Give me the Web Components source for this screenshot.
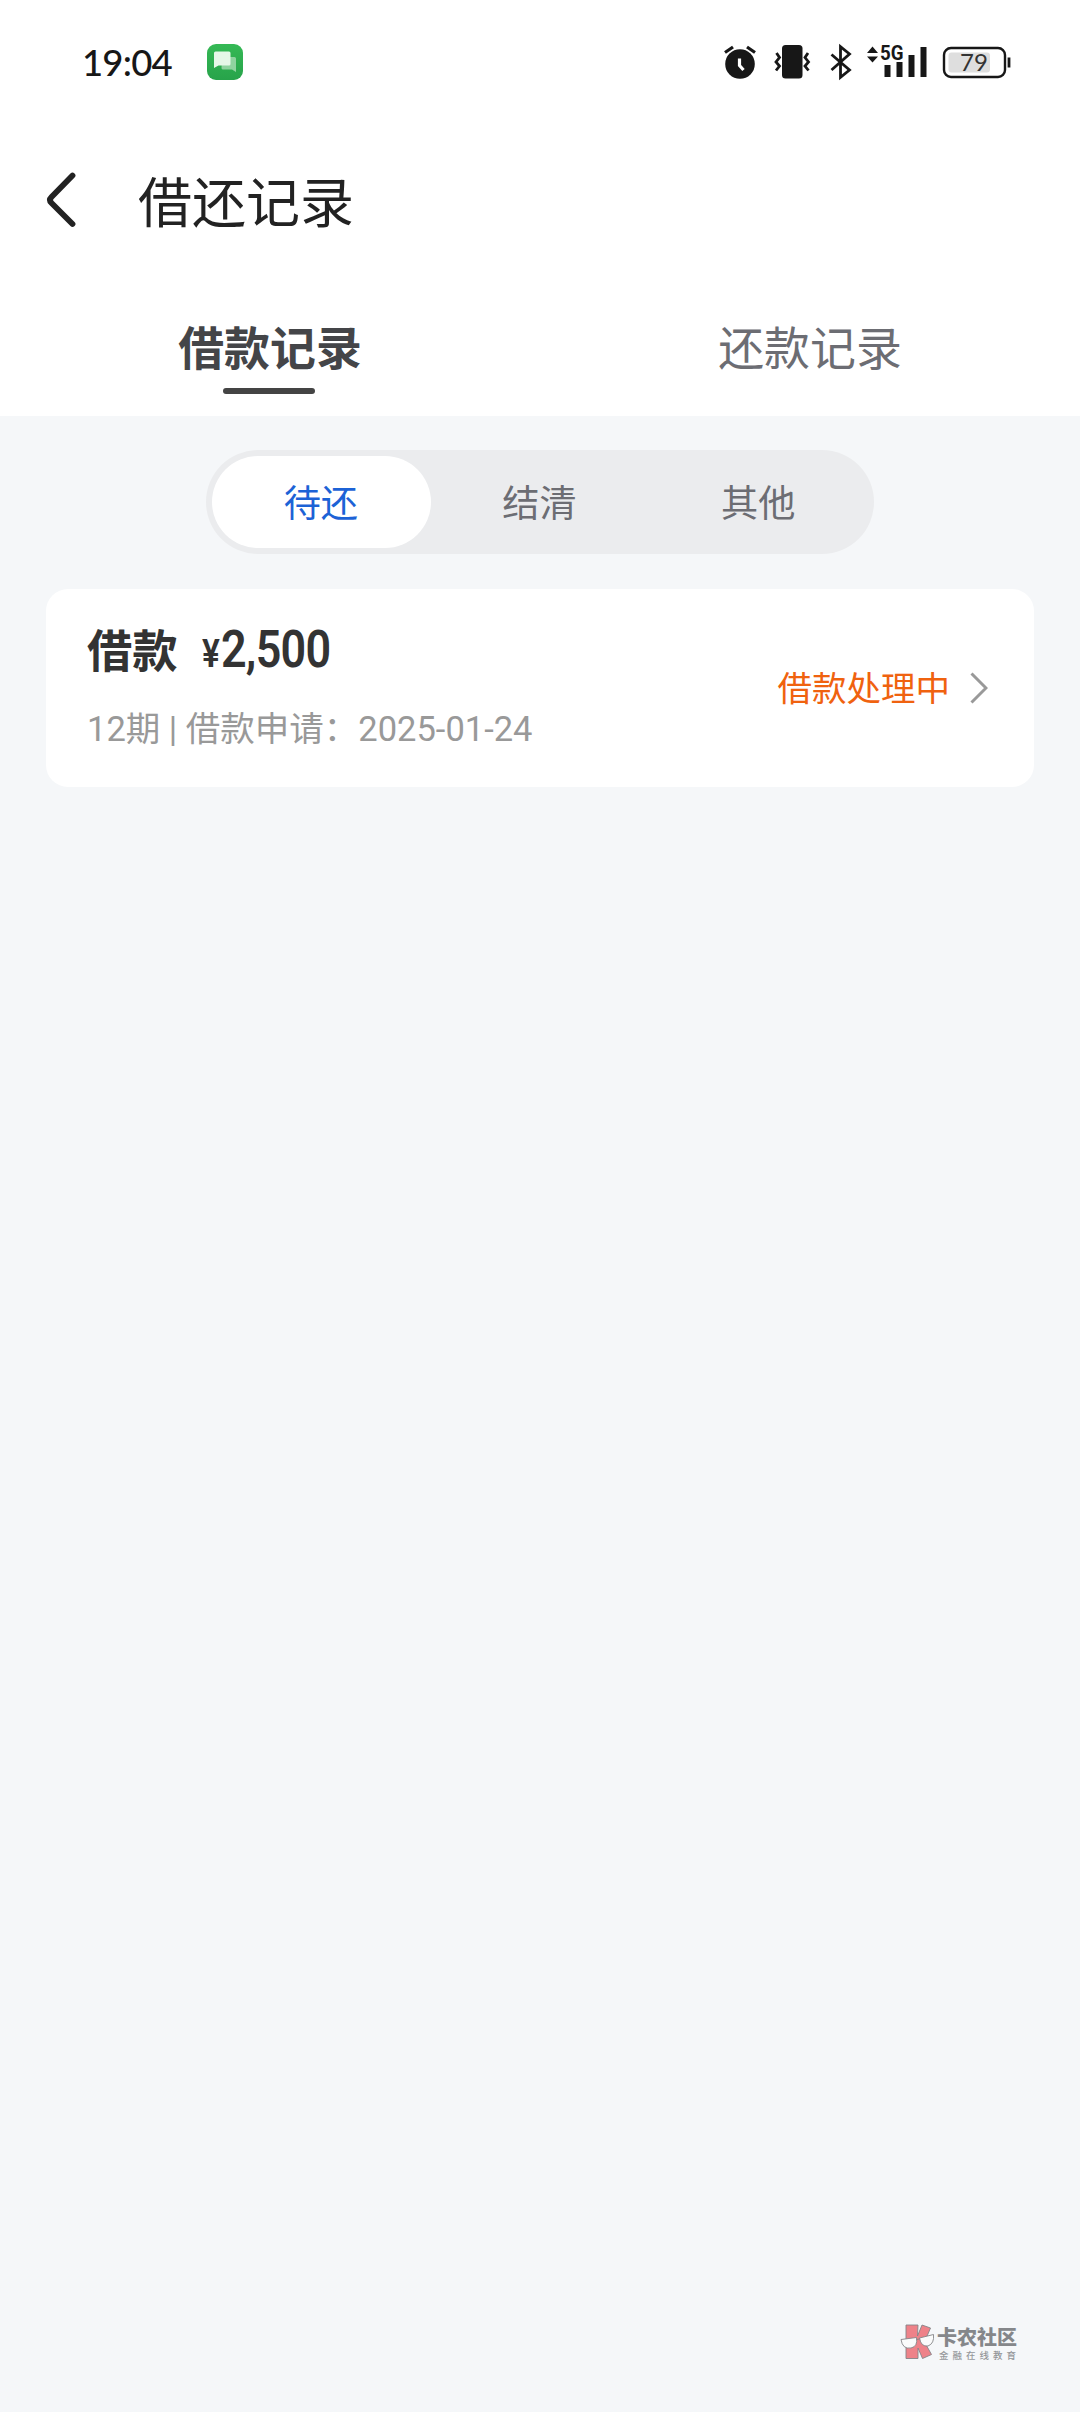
<!DOCTYPE html>
<html lang="zh-CN">
<head>
<meta charset="utf-8">
<meta name="viewport" content="width=device-width">
<title>借还记录</title>
<style>
html,body{margin:0;background:#f5f7f9}
body{font-family:Roboto,"Noto Sans CJK SC",sans-serif}
</style>
</head>
<body>
<loan-app></loan-app>
<script>
const define=(name,html)=>customElements.define(name,class extends HTMLElement{
  constructor(){super();this.attachShadow({mode:'open'}).innerHTML=html;}
});

define('status-bar',`<style>
:host{display:flex;height:124px;box-sizing:border-box;padding:0 68px 0 82px;align-items:center;color:#171717}
time{font:500 36.500px/44px Lato,sans-serif;width:125px;white-space:nowrap;letter-spacing:-.8px}
svg{display:block;flex:none}
.right{margin-left:auto}
</style>
<time>19:04</time>
<svg width="36" height="36" viewBox="0 0 36 36"><defs><linearGradient id="g" x2="0" y2="1"><stop stop-color="#35b955"/><stop offset="1" stop-color="#27a34a"/></linearGradient></defs><rect width="36" height="36" rx="9" fill="url(#g)"/><path d="M15 13h12.500q1.500 0 1.500 1.500V28l-4-2.500H16q-1.500 0-1.500-1.500z" fill="#8fd39f"/><path d="M8.500 7.500H22q1.500 0 1.500 1.500v11q0 1.500-1.500 1.500H11.500L7 24V9q0-1.500 1.500-1.500z" fill="#e6f7e8"/></svg>
<svg class="right" width="290" height="44" viewBox="722 40 290 44" fill="none" stroke="#171717">
<circle cx="740" cy="64" r="14.800" fill="#171717" stroke="none"/><path d="M725 52.500l8-5.500M755 52.500l-8-5.500" stroke-width="3.200"/><path d="M739.500 58.500v7l4 4.500" stroke="#fff" stroke-width="3.200"/>
<rect x="782" y="45" width="20.500" height="33.500" rx="3.500" fill="#171717" stroke="none"/><path d="M776.500 53l3 4.500-3.500 4.500 3.500 4-3.500 4.500M808 53l-3 4.500 3.500 4.500-3.500 4 3.500 4.500" stroke-width="2.800"/>
<path d="M831.500 54.500l18 15.500-9 7.300V46.700l9 7.300-18 16" stroke-width="2.800"/>
<path d="M867 53l5.500-6.500 5.500 6.500zM867 56.500l5.500 6 5.500-6z" fill="#171717" stroke="none"/>
<path d="M884.500 65h6v12h-6zM896.500 62h6v15h-6zM908.500 55h6v22h-6zM920.500 47h6v30h-6z" fill="#171717" stroke="none"/>
<text x="880" y="60" font-family="Roboto" font-size="20.500" font-weight="700" fill="#171717" stroke="#fff" stroke-width="1" paint-order="stroke" textLength="23.500" lengthAdjust="spacingAndGlyphs">5G</text>
<rect x="948.500" y="52.500" width="41.500" height="20" rx="3" fill="#dedede" stroke="none"/>
<rect x="944" y="48" width="61" height="29" rx="7" stroke-width="2.400"/><path d="M1009 57.500v10" stroke-width="2.800"/>
<text x="960" y="70.500" font-family="Lato" font-size="24" font-weight="400" fill="#333" stroke="none">79</text>
</svg>`);

define('nav-header',`<style>
:host{display:flex;height:156px;box-sizing:border-box;padding:0 0 0 46px;align-items:center;color:#222}
svg{display:block;width:92px;height:60px;margin-bottom:5px}
h1{margin:0 0 5px;font:400 54px/80px "Noto Sans CJK SC",sans-serif}
</style>
<svg viewBox="46 170 92 60"><path d="M72.500 175.500L51.500 197q-3 3 0 6L72.500 224" fill="none" stroke="#222" stroke-width="5.800" stroke-linecap="round"/></svg><h1><slot></slot></h1>`);

define('main-tab',`<style>
:host{flex:1;display:flex;flex-direction:column;align-items:center;font:400 45.900px/68px "Noto Sans CJK SC",sans-serif;color:#6c6d73;padding-top:31px}
i{display:none;width:92px;height:6px;border-radius:3px;background:#444;margin:9px 3px 0 0}
:host([active]){color:#444548;font-weight:700}
:host([active]) i{display:block}
</style><span><slot></slot></span><i></i>`);

define('tab-row',`<style>:host{display:flex;height:136px}</style><slot></slot>`);

define('segment-item',`<style>
:host{flex:1;display:flex;align-items:center;justify-content:center;border-radius:46px;font:400 37.200px/54px "Noto Sans CJK SC",sans-serif;color:#6c6d73;box-sizing:border-box;padding:0 1px 3px 0}
:host([active]){background:#fff;color:#1c62d6}
</style><slot></slot>`);

define('segment-bar',`<style>:host{display:flex;width:668px;height:104px;box-sizing:border-box;padding:6px;border-radius:52px;background:#ebecee;margin:34px auto 35px}</style><slot></slot>`);

define('loan-card',`<style>
:host{display:flex;margin:0 46px;height:198px;box-sizing:border-box;border-radius:22px;background:#fff;padding:0 46px 0 41px;align-items:center;justify-content:space-between}
.main{display:flex;flex-direction:column;margin-bottom:8px}
.top{display:flex;align-items:baseline;height:68px;font:700 45.300px/68px "Noto Sans CJK SC",sans-serif;color:#333}
.money{display:flex;align-items:baseline;margin-left:24px;font-family:Roboto,sans-serif;font-weight:600;white-space:nowrap;font-size:51px;transform:translateY(-1px) scaleX(.88);transform-origin:0 50%;letter-spacing:-.8px}
.money small{font-size:38px;margin-right:2px}
.meta{font:400 34.500px/52px Roboto,"Noto Sans CJK SC",sans-serif;color:#999;margin-top:21px;white-space:nowrap}
.state{display:flex;align-items:center;gap:20px;font:400 34.500px/52px "Noto Sans CJK SC",sans-serif;color:#f0620f}
.state span{margin-bottom:5px}
svg{display:block}
</style>
<div class="main"><div class="top"><slot name="type"></slot><span class="money"><small>¥</small><slot name="amount"></slot></span></div><div class="meta"><slot name="meta"></slot></div></div>
<div class="state"><span><slot name="state"></slot></span><svg width="18" height="34" viewBox="0 0 18 34"><path d="M1.500 2.500L16 17 1.500 31.500" fill="none" stroke="#999" stroke-width="3"/></svg></div>`);

define('community-mark',`<style>
:host{display:flex;margin:auto 61px 50px auto;width:119px;height:40px;align-items:center}
svg{flex:none;display:block}
.words{display:flex;flex-direction:column;margin-left:3px;white-space:nowrap;font-family:"Noto Sans CJK SC",sans-serif}
b{font-size:20px;line-height:22px;font-weight:900;color:#85878a}
small{font-size:9.500px;line-height:14px;letter-spacing:4px;color:#96989b;font-weight:500;margin:0 0 -3px 2px}
</style>
<svg width="34" height="36" viewBox="0 0 34 36" stroke="#858588" stroke-width=".9"><path d="M6 1h12l-.5 11L22 1l8.500 3-6 14 7 12.500-9 4L18 24v10.500H6z" fill="#ee8289"/><path d="M1 15.500l15.500-2q1.500 9-5.500 10.500Q2.500 25.500 1 15.500zM19.500 14L33.500 10.500q1 9-5.500 11.500-7 1-8.500-8z" fill="#fafbfb"/><path d="M16.500 15.500l3-.5" fill="none"/></svg>
<div class="words"><b>卡农社区</b><small>金融在线教育</small></div>`);

define('loan-app',`<style>
:host{display:flex;flex-direction:column;width:1080px;height:2412px;background:#f5f7f9}
header{background:#fff;height:416px}
</style>
<header><status-bar></status-bar><nav-header>借还记录</nav-header>
<tab-row><main-tab active>借款记录</main-tab><main-tab>还款记录</main-tab></tab-row></header>
<segment-bar><segment-item active>待还</segment-item><segment-item>结清</segment-item><segment-item>其他</segment-item></segment-bar>
<loan-card><span slot="type">借款</span><span slot="amount">2,500</span><span slot="meta">12期 | 借款申请：2025-01-24</span><span slot="state">借款处理中</span></loan-card>
<community-mark></community-mark>`);
</script>
</body>
</html>
